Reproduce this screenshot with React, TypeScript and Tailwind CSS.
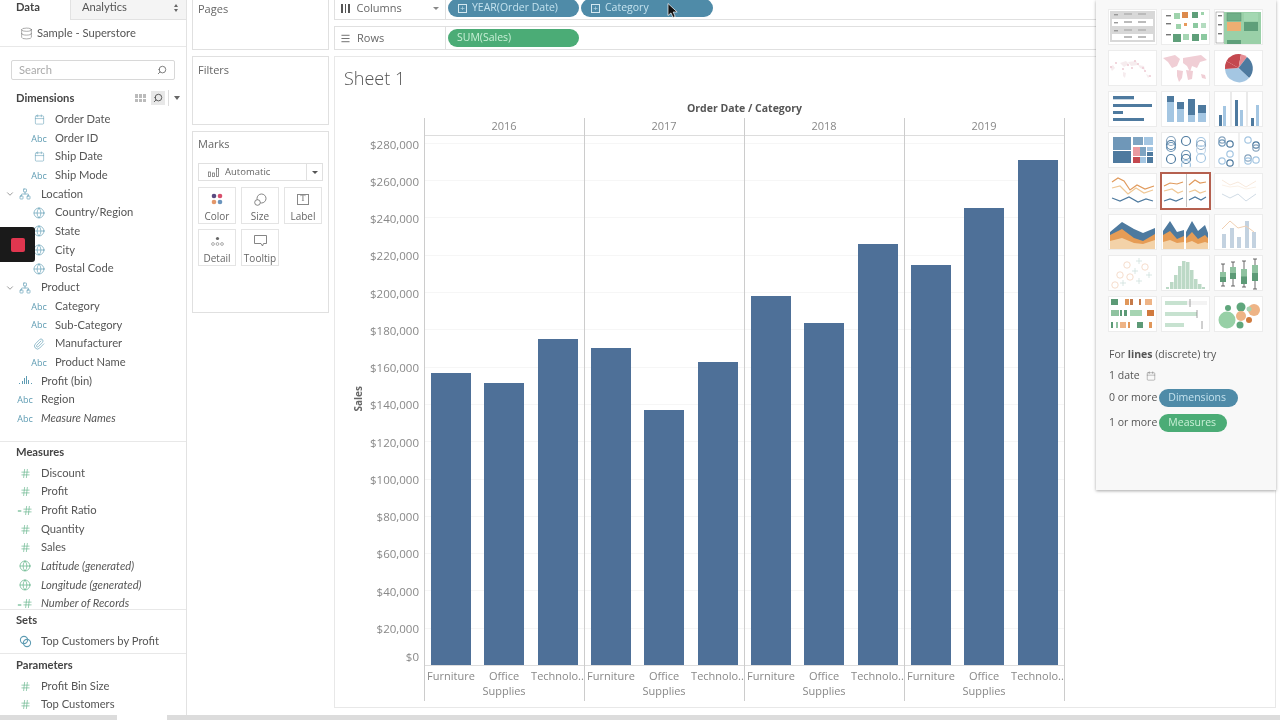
import type { ReactNode } from "react";
import { Calendar, ChevronDown, Globe, Hash, Network, Paperclip, Search, Database, Menu } from "lucide-react";

type Field = { name: string; kind: string; level?: number; italic?: boolean; open?: boolean };

const dimensions: Field[] = [
  { name: "Order Date", kind: "date", level: 2 },
  { name: "Order ID", kind: "abc", level: 2 },
  { name: "Ship Date", kind: "date", level: 2 },
  { name: "Ship Mode", kind: "abc", level: 2 },
  { name: "Location", kind: "tree", open: true },
  { name: "Country/Region", kind: "globe", level: 2 },
  { name: "State", kind: "globe", level: 2 },
  { name: "City", kind: "globe", level: 2 },
  { name: "Postal Code", kind: "globe", level: 2 },
  { name: "Product", kind: "tree", open: true },
  { name: "Category", kind: "abc", level: 2 },
  { name: "Sub-Category", kind: "abc", level: 2 },
  { name: "Manufacturer", kind: "clip", level: 2 },
  { name: "Product Name", kind: "abc", level: 2 },
  { name: "Profit (bin)", kind: "bin" },
  { name: "Region", kind: "abc" },
  { name: "Measure Names", kind: "abc", italic: true },
];

const measures: Field[] = [
  { name: "Discount", kind: "hash" },
  { name: "Profit", kind: "hash" },
  { name: "Profit Ratio", kind: "calc" },
  { name: "Quantity", kind: "hash" },
  { name: "Sales", kind: "hash" },
  { name: "Latitude (generated)", kind: "greenglobe", italic: true },
  { name: "Longitude (generated)", kind: "greenglobe", italic: true },
  { name: "Number of Records", kind: "calc", italic: true },
];

function FieldIcon({ kind }: { kind: string }) {
  if (kind === "abc") return <span className="font-['Open_Sans',sans-serif] text-[9px] leading-none text-[#5f9cb3]">Abc</span>;
  if (kind === "date") return <Calendar size={11} strokeWidth={1.2} className="text-[#5f9cb3]" />;
  if (kind === "globe") return <Globe size={12} strokeWidth={1.3} className="text-[#5f9cb3]" />;
  if (kind === "greenglobe") return <Globe size={12} strokeWidth={1.3} className="text-[#55ad7e]" />;
  if (kind === "tree") return <Network size={12} strokeWidth={1.3} className="text-[#5f9cb3]" />;
  if (kind === "clip") return <Paperclip size={12} strokeWidth={1.3} className="text-[#5f9cb3]" />;
  if (kind === "hash") return <Hash size={11} strokeWidth={1.3} className="text-[#55ad7e]" />;
  if (kind === "calc")
    return (
      <span className="flex items-center">
        <span className="text-[8px] leading-none text-[#55ad7e]">=</span>
        <Hash size={11} strokeWidth={1.3} className="text-[#55ad7e]" />
      </span>
    );
  if (kind === "bin")
    return (
      <svg width="13" height="9" viewBox="0 0 13 9" className="text-[#5f9cb3]" fill="currentColor">
        <rect x="0" y="7" width="1" height="1" />
        <rect x="3" y="5" width="1" height="3" />
        <rect x="5" y="2" width="1" height="6" />
        <rect x="7" y="0" width="1" height="8" />
        <rect x="9" y="4" width="1" height="4" />
        <rect x="12" y="7" width="1" height="1" />
      </svg>
    );
  return (
    <svg width="13" height="13" viewBox="0 0 13 13" fill="none" stroke="#5f9cb3" strokeWidth="1.1">
      <circle cx="5" cy="5" r="3.6" />
      <circle cx="8" cy="8" r="3.6" />
    </svg>
  );
}

function Row({ f }: { f: Field }) {
  return (
    <div className={`flex h-[18.7px] items-center ${f.level === 2 ? "pl-[31px]" : f.open ? "pl-[5px]" : "pl-[17px]"}`}>
      {f.open && <ChevronDown size={10} className="mr-[2px] text-[#888]" />}
      <span className="mr-[8px] flex w-[16px] justify-center">
        <FieldIcon kind={f.kind} />
      </span>
      <span className={`whitespace-nowrap ${f.italic ? "italic" : ""}`}>{f.name}</span>
    </div>
  );
}

function Sidebar() {
  return (
    <aside className="flex w-[187px] shrink-0 flex-col border-r border-[#e2e2e2] bg-white font-['Lato',sans-serif] text-[11.2px] text-[#555]">
      <div className="flex h-[20px] shrink-0">
        <div className="flex w-[70px] items-center pb-[5px] pl-[16px] font-bold text-[#444]">Data</div>
        <div className="flex flex-1 items-center justify-between border-b border-l border-[#e2e2e2] bg-[#f4f4f4] pb-[4px] pl-[11px] pr-[8px]">
          <span>Analytics</span>
          <span className="flex flex-col gap-[2px]">
            <span className="h-0 w-0 border-x-[2.5px] border-b-[3px] border-x-transparent border-b-[#666]" />
            <span className="h-0 w-0 border-x-[2.5px] border-t-[3px] border-x-transparent border-t-[#666]" />
          </span>
        </div>
      </div>
      <div className="flex h-[27px] shrink-0 items-center border-b border-[#e8e8e8] pl-[20px]">
        <Database size={13} strokeWidth={1} className="mr-[4px] text-[#666]" />
        <span>Sample - Superstore</span>
      </div>
      <div className="mx-[11px] mt-[13px] flex h-[20px] shrink-0 items-center justify-between rounded-[2px] border border-[#d8d8d8] px-[7px] text-[#aaa]">
        <span>Search</span>
        <Search size={10} className="-scale-x-100 text-[#666]" />
      </div>
      <div className="mt-[8px] flex h-[20px] shrink-0 items-center pl-[16px] pr-[6px]">
        <span className="font-bold text-[#444]">Dimensions</span>
        <span className="ml-auto mr-[5px] grid h-[8px] w-[11px] grid-cols-3 gap-[1px]">
          {[0, 1, 2, 3, 4, 5].map((i) => (
            <span key={i} className="bg-[#bbb]" />
          ))}
        </span>
        <span className="flex h-[14px] w-[14px] items-center justify-center bg-[#e8e8e8]">
          <Search size={10} className="-scale-x-100 text-[#444]" />
        </span>
        <span className="ml-[3px] mr-[5px] h-[16px] w-px bg-[#ddd]" />
        <span className="h-0 w-0 border-x-[3px] border-t-[4px] border-x-transparent border-t-[#666]" />
      </div>
      <div className="mt-[2px] shrink-0 pb-[13px]">
        {dimensions.map((f) => (
          <Row key={f.name} f={f} />
        ))}
      </div>
      <div className="h-[169px] shrink-0 overflow-hidden border-y border-[#e8e8e8]">
        <div className="flex h-[22px] items-center pl-[16px] font-bold text-[#444]">Measures</div>
        {measures.map((f) => (
          <Row key={f.name} f={f} />
        ))}
      </div>
      <div className="h-[44px] shrink-0 border-b border-[#e8e8e8]">
        <div className="flex h-[22px] items-center pl-[16px] font-bold text-[#444]">Sets</div>
        <Row f={{ name: "Top Customers by Profit", kind: "set" }} />
      </div>
      <div className="flex h-[23px] shrink-0 items-center pl-[16px] font-bold text-[#444]">Parameters</div>
      <Row f={{ name: "Profit Bin Size", kind: "hash" }} />
      <Row f={{ name: "Top Customers", kind: "hash" }} />
    </aside>
  );
}

function MarkCard({ label, children }: { label: string; children: ReactNode }) {
  return (
    <div className="flex h-[37px] w-[38px] flex-col items-center justify-between border border-[#e4e4e4] pt-[4px] text-[10px] leading-[13px] text-[#666]">
      <span className="flex h-[14px] items-center">{children}</span>
      <span>{label}</span>
    </div>
  );
}

function CardsPanel() {
  return (
    <div className="flex h-full w-[137px] shrink-0 flex-col gap-[6px] text-[11px] text-[#666]">
      <div className="-mt-px h-[51px] shrink-0 border border-[#e0e0e0] px-[5px] pt-[1px]">Pages</div>
      <div className="h-[69px] shrink-0 border border-[#e0e0e0] px-[5px] pt-[5px]">Filters</div>
      <div className="h-[182px] shrink-0 border border-[#e0e0e0] px-[5px] pt-[4px]">
        <div>Marks</div>
        <div className="mt-[10.5px] flex h-[18px] items-center border border-[#e0e0e0] pl-[9px] text-[9.5px]">
          <svg width="12" height="9" viewBox="0 0 12 9" fill="none" stroke="#777" strokeWidth="0.8" className="mr-[5px]">
            <rect x="0.5" y="4" width="2" height="4.5" />
            <rect x="4.5" y="5" width="2" height="3.5" />
            <rect x="8.5" y="0.5" width="2" height="8" />
          </svg>
          Automatic
          <span className="ml-auto flex h-full w-[16px] items-center justify-center border-l border-[#e0e0e0]">
            <span className="h-0 w-0 border-x-[3px] border-t-[3px] border-x-transparent border-t-[#555]" />
          </span>
        </div>
        <div className="mt-[6px] grid grid-cols-[38px_38px_38px] gap-x-[5px] gap-y-[5px]">
          <MarkCard label="Color">
            <svg width="12" height="12" viewBox="0 0 12 12">
              <circle cx="3" cy="3" r="2.3" fill="#5a4a80" />
              <circle cx="9" cy="3" r="2.3" fill="#d8506c" />
              <circle cx="3" cy="9" r="2.3" fill="#e3976a" />
              <circle cx="9" cy="9" r="2.3" fill="#6a94bd" />
            </svg>
          </MarkCard>
          <MarkCard label="Size">
            <svg width="13" height="13" viewBox="0 0 13 13" fill="none" stroke="#777" strokeWidth="0.9">
              <circle cx="7.5" cy="5.5" r="4.5" />
              <circle cx="3.5" cy="9.5" r="2.8" fill="white" />
            </svg>
          </MarkCard>
          <MarkCard label="Label">
            <span className="flex h-[11px] w-[12px] items-center justify-center border border-[#888] font-['Liberation_Serif',serif] text-[8px] leading-none">T</span>
          </MarkCard>
          <MarkCard label="Detail">
            <svg width="13" height="11" viewBox="0 0 13 11" fill="none" stroke="#888" strokeWidth="0.7">
              <circle cx="6.5" cy="2.5" r="1.6" fill="#666" stroke="none" />
              <circle cx="2" cy="8" r="1.4" />
              <circle cx="6.5" cy="8" r="1.4" />
              <circle cx="11" cy="8" r="1.4" />
            </svg>
          </MarkCard>
          <MarkCard label="Tooltip">
            <svg width="13" height="12" viewBox="0 0 13 12" fill="none" stroke="#777" strokeWidth="0.9">
              <path d="M.5.5h12v8H9.5L8.5 11 7 8.5H.5z" />
            </svg>
          </MarkCard>
        </div>
      </div>
    </div>
  );
}

function Pill({ label, width, green, plus }: { label: string; width: string; green?: boolean; plus?: boolean }) {
  return (
    <div
      className={`flex shrink-0 items-center rounded-full text-[10.5px] ${width} ${
        green ? "h-[18px] bg-[#4bac76] pl-[9px] text-[#c9f0d6]" : "-mt-px h-[18px] bg-[#4f8ba8] pl-[10px] text-[#c4e2ee]"
      }`}
    >
      {plus && (
        <span className="mr-[5px] flex h-[9px] w-[9px] items-center justify-center border border-[#d4e8f0] text-[8px] leading-none">+</span>
      )}
      {label}
    </div>
  );
}

const years = [
  { year: "2016", tops: [373, 383, 339] },
  { year: "2017", tops: [348, 410, 362] },
  { year: "2018", tops: [296, 323, 244] },
  { year: "2019", tops: [265, 208, 160] },
];

const ticks = ["$280,000", "$260,000", "$240,000", "$220,000", "$200,000", "$180,000", "$160,000", "$140,000", "$120,000", "$100,000", "$80,000", "$60,000", "$40,000", "$20,000"];

function Chart() {
  return (
    <div className="flex text-[#888]">
      <div className="flex w-[89px] shrink-0">
        <div className="mt-[33px] flex h-[530px] w-[35px] shrink-0 items-center justify-end pr-[4px]">
          <span className="rotate-180 text-[10px] font-bold text-[#666] [writing-mode:vertical-rl]">Sales</span>
        </div>
        <div className="mt-[24.500px] flex-1 pr-[6px] text-right text-[11.5px]">
          {ticks.map((t) => (
            <div key={t} className="flex h-[37.25px] items-center justify-end">
              {t}
            </div>
          ))}
          <div className="-mt-[9px] flex h-[37.3px] items-center justify-end">$0</div>
        </div>
      </div>
      <div className="flex flex-col">
        <div className="flex h-[16px] items-center justify-center text-[10.5px] font-bold text-[#555]">Order Date / Category</div>
        <div className="mt-px flex border-r border-[#ccc]">
          {years.map((y) => (
            <div key={y.year} className="w-[160px] border-l border-[#ccc]">
              <div className="flex h-[18px] items-center justify-center border-b border-[#ddd] pr-px text-[11px]">{y.year}</div>
              <div className="flex h-[530px] items-end gap-[13.3px] border-b border-[#ddd] bg-[repeating-linear-gradient(to_top,transparent_0,transparent_36.3px,#f6f6f6_36.3px,#f6f6f6_37.3px)] pl-[6px]">
                {y.tops.map((top, i) => (
                  <div key={i} className="w-[40px] bg-[#4e7098]" style={{ height: 665 - top }} />
                ))}
              </div>
              <div className="flex h-[35px] pt-[2px] text-center text-[11px] leading-[15px]">
                <span className="w-[53px] pr-px">Furniture</span>
                <span className="w-[53px] pr-px">
                  Office
                  <br />
                  Supplies
                </span>
                <span className="w-[53px] whitespace-nowrap">Technolo..</span>
              </div>
            </div>
          ))}
        </div>
      </div>
    </div>
  );
}

const line = "fill-none stroke-[1.2]";

const thumbs: ReactNode[] = [
  <>
    <rect x="2" y="2" width="45" height="31" fill="#d8d8d8" />
    <rect x="4" y="10" width="41" height="7" fill="#fff" />
    <rect x="4" y="25" width="41" height="6" fill="#fff" />
    {[5, 13, 21, 28].map((y) => [16, 30].map((x) => <rect key={x + "-" + y} x={x} y={y - 1} width="8" height="2" fill="#bbb" />))}
    {[5, 13, 21].map((y) => <rect key={y} x="6" y={y} width="4" height="1.4" fill="#999" />)}
  </>,
  <>
    {[6, 14, 25].map((y) => <rect key={y} x="5" y={y} width="5" height="1.4" fill="#777" />)}
    <rect x="13" y="4" width="6" height="6" fill="#9fd3ac" />
    <rect x="21" y="3" width="6" height="6" fill="#dd8a4c" />
    <rect x="31" y="3" width="6" height="6" fill="#5f9f7a" />
    <rect x="40" y="3" width="3" height="3" fill="#9fd3ac" />
    <rect x="15" y="15" width="5" height="5" fill="#9fd3ac" />
    <rect x="23" y="14" width="3" height="3" fill="#e89a5c" />
    <rect x="32" y="14" width="5" height="5" fill="#8cc9a0" />
    <rect x="40" y="14" width="5" height="5" fill="#b4dcc0" />
    <rect x="12" y="25" width="8" height="8" fill="#5f9f7a" />
    <rect x="22" y="25" width="6" height="6" fill="#a6d6b4" />
    <rect x="31" y="25" width="7" height="7" fill="#5f9f7a" />
    <rect x="40" y="25" width="6" height="6" fill="#8cc9a0" />
  </>,
  <>
    <rect x="2" y="3" width="8" height="31" fill="#fff" stroke="#777" strokeWidth="0.5" />
    {[6, 15, 24].map((y) => <rect key={y} x="4" y={y} width="4" height="1.4" fill="#777" />)}
    <rect x="10" y="3" width="37" height="33" fill="#9ad0a8" />
    <rect x="13" y="4" width="14" height="8" fill="#6fb088" stroke="#5c8b70" strokeWidth="0.5" />
    <rect x="30" y="4" width="14" height="8" fill="#a4d8b2" />
    <rect x="13" y="13" width="14" height="9" fill="#eeae72" />
    <rect x="30" y="13" width="14" height="9" fill="#5f9f7a" />
    <rect x="13" y="31" width="14" height="5" fill="#5f9f7a" />
  </>,
  <g opacity="0.75">
    <path d="M2 17l3-2 2 3-3 3zM12 13l6-2 3 3-5 3zM20 12l8-1 2 4-7 1zM30 15l6 1 1 4-5-2zM15 22l3 1-1 5-2-2zM38 24l4 2-2 2z" fill="#f4e6e9" />
    {[[3, 17], [8, 13], [20, 15], [24, 18], [30, 14], [35, 18], [37, 21], [42, 26], [15, 19], [27, 11]].map(([x, y]) => (
      <circle key={x} cx={x} cy={y} r="1.1" fill="#e9bcc8" />
    ))}
  </g>,
  <path d="M2 8l12-3 5 4-3 7-5 2-4-6zM16 20l6 1-1 7-3 4-2-6zM22 8l18-3 6 5-7 2-3 6-5-2-2 6-3-6-4-3zM25 20l7 1-1 8-4 1zM40 24l4 1 1 4-4-1z" fill="#f0ced5" />,
  <>
    <path d="M24.500 18L12.500 11A14 14 0 0 1 27 4.200z" fill="#c4484f" />
    <path d="M24.500 18L27 4.200A14 14 0 0 1 33 7z" fill="#e68d94" />
    <path d="M24.500 18L33 7A14 14 0 0 1 35 28z" fill="#4e7a9f" />
    <path d="M24.500 18L35 28A14 14 0 0 1 11 19z" fill="#a4c6e2" />
    <path d="M24.500 18L11 19A14 14 0 0 1 12.500 11z" fill="#c4484f" />
  </>,
  <g fill="#4e7a9f">
    <rect x="5" y="5" width="21" height="3.300" />
    <rect x="5" y="13" width="39" height="3" />
    <rect x="5" y="20" width="10" height="3" />
    <rect x="5" y="27" width="31" height="3" />
  </g>,
  <>
    <path d="M6 5h7v6H6zM16 11h7v7h-7zM27 8h7v16h-7zM37 14h8v8h-8z" fill="#4e7a9f" />
    <path d="M6 11h7v20H6zM16 18h7v13h-7zM27 24h7v7h-7zM37 22h8v9h-8z" fill="#a4c6e2" />
  </>,
  <>
    <path d="M17 0v36M33 0v36" stroke="#bbb" strokeWidth="0.6" />
    <path d="M5 24h3v12H5zM21 9h3v27h-3zM37 27h3v9h-3z" fill="#4e7a9f" />
    <path d="M9 15h3v21H9zM26 19h3v17h-3zM42 14h3v22h-3z" fill="#a4c6e2" />
  </>,
  <>
    <rect x="5" y="5" width="18" height="13" fill="#6f97b8" />
    <rect x="5" y="19" width="18" height="12" fill="#4e7a9f" />
    <rect x="25" y="5" width="10" height="8" fill="#7ea4c2" />
    <rect x="36" y="5" width="9" height="8" fill="#a4c6e2" />
    <rect x="25" y="15" width="7" height="9" fill="#ea9aa0" />
    <rect x="32" y="15" width="6" height="9" fill="#7ea4c2" />
    <rect x="39" y="15" width="6" height="4" fill="#a4c6e2" />
    <rect x="39" y="20" width="6" height="4" fill="#4e7a9f" />
    <rect x="25" y="25" width="7" height="6" fill="#c4484f" />
    <rect x="32" y="25" width="6" height="6" fill="#a4c6e2" />
    <rect x="39" y="25" width="6" height="6" fill="#4e7a9f" />
  </>,
  <g fill="none" strokeWidth="1.200">
    {[[10, 9, "#8aa6bf"], [10, 13, "#4e7a9f"], [10, 15, "#6f97b8"], [25, 9, "#4e7a9f"], [40, 10, "#a4c6e2"], [40, 13, "#8aa6bf"], [10, 27, "#4e7a9f"], [25, 23, "#6f97b8"], [25, 27, "#4e7a9f"], [40, 26, "#a4c6e2"], [25, 33, "#a4c6e2"], [40, 18, "#c4d8ea"]].map(([x, y, c], i) => (
      <circle key={i} cx={x as number} cy={y as number} r="4.500" stroke={c as string} />
    ))}
  </g>,
  <g fill="none" strokeWidth="1.200">
    <path d="M25 0v36" stroke="#ccc" strokeWidth="0.6" />
    {[[8, 8, "#8aa6bf"], [8, 11, "#6f97b8"], [16, 12, "#4e7a9f"], [16, 22, "#a4c6e2"], [8, 29, "#a4c6e2"], [16, 31, "#4e7a9f"], [34, 8, "#a4c6e2"], [42, 13, "#4e7a9f"], [42, 16, "#8aa6bf"], [34, 26, "#8aa6bf"], [34, 29, "#a4c6e2"], [42, 28, "#a4c6e2"]].map(([x, y, c], i) => (
      <circle key={i} cx={x as number} cy={y as number} r="3.200" stroke={c as string} />
    ))}
  </g>,
  <>
    <path d="M4 9l6-4 6 3 6 9 7-5 8 4 9-3" className={line} stroke="#e09a5c" />
    <path d="M4 15l8-2 8 8 8-6 8 5 9-3" className={line} stroke="#f0c896" />
    <path d="M4 25l8 3 9-4 9 5 8-3 7 2" className={line} stroke="#4e7a9f" />
  </>,
  <>
    <path d="M25.500 1v33" stroke="#aaa" strokeWidth="0.7" />
    <path d="M3 13l6-3 7 1 6-2M28 12l6-5 5 3 6-1" className={line} stroke="#e09a5c" />
    <path d="M3 18l8-2 6 4 5-2M28 19l6-2 5 3 6-2" className={line} stroke="#f0c896" />
    <path d="M3 28l6-2 6 2 7-3M28 27l6-3 6 3 5-3" className={line} stroke="#4e7a9f" />
  </>,
  <g opacity="0.4">
    <path d="M8 7l8 5 8-3 8 5 10-6" fill="none" stroke="#edc8a8" />
    <path d="M8 12l8 2 8-1 8 3 10-2" fill="none" stroke="#f4dcc4" />
    <path d="M8 21l8 4 8-4 8 7 10-7" fill="none" stroke="#8aa6bf" />
  </g>,
  <>
    <path d="M2 18l12-10 12 7 9 4 12-5v22H2z" fill="#4e7a9f" />
    <path d="M2 21l12-6 12 9 9 3 12-7v16H2z" fill="#e69c55" />
    <path d="M2 27l12-3 12 5 9 1 12-4v9H2z" fill="#f3d2a8" />
  </>,
  <>
    <path d="M2 17l7-10 7 11 7-2v20H2zM25 18l6-11 6 10 7-6 3 8v17H25z" fill="#4e7a9f" />
    <path d="M2 21l7-4 7 8 7-3v14H2zM25 24l6-6 6 7 7-4 3 3v12H25z" fill="#e69c55" />
    <path d="M2 28l7-2 7 3 7-1v8H2zM25 29l6-2 6 3 7-2 3 1v7H25z" fill="#f3d2a8" />
  </>,
  <>
    <g fill="#c3d2e0">
      <rect x="8" y="20" width="4" height="14" />
      <rect x="16" y="14" width="4" height="20" />
      <rect x="23" y="23" width="4" height="11" />
      <rect x="31" y="7" width="4" height="27" />
      <rect x="38" y="18" width="4" height="16" />
    </g>
    <path d="M8 15l8-8 8 7 8-2 8 6" fill="none" stroke="#f0cfb2" />
  </>,
  <g fill="none" strokeWidth="0.8" opacity="0.55">
    {[[19, 10], [12, 20], [7, 30], [22, 22], [37, 12]].map(([x, y]) => <circle key={x} cx={x} cy={y} r="3.200" stroke="#e9b08a" />)}
    {[[31, 6], [27, 16], [15, 28], [31, 26], [41, 20]].map(([x, y]) => <path key={x} d={`M${x - 3} ${y}h6M${x} ${y - 3}v6`} stroke="#a7c8c0" />)}
  </g>,
  <g fill="#bcd9c6">
    <rect x="5" y="32" width="3" height="2" />
    <rect x="9" y="27" width="3.500" height="7" />
    <rect x="13" y="20" width="3.500" height="14" />
    <rect x="17" y="11" width="3.500" height="23" />
    <rect x="21" y="6" width="3.500" height="28" />
    <rect x="25" y="7" width="3.500" height="27" />
    <rect x="29" y="15" width="3.500" height="19" />
    <rect x="33" y="24" width="3.500" height="10" />
    <rect x="37" y="29" width="3.500" height="5" />
    <rect x="41" y="32" width="3" height="2" />
  </g>,
  <>
    {[[9, 9, 31, 17, 27], [19, 7, 31, 12, 24], [30, 6, 32, 14, 29], [41, 4, 34, 10, 26]].map(([x, a, b, c, d]) => (
      <g key={x}>
        <path d={`M${x} ${a}v${b - a}M${x - 2} ${a}h4M${x - 2} ${b}h4`} stroke="#444" strokeWidth="0.8" />
        <rect x={x - 3} y={c} width="6" height={d - c} fill="#8fc2a0" />
        <rect x={x - 3} y={(c + d) / 2} width="6" height={(d - c) / 2} fill="#5c9a76" />
      </g>
    ))}
  </>,
  <>
    <rect x="3" y="3" width="7" height="6" fill="#5c9a76" />
    <rect x="17" y="3" width="4" height="6" fill="#e0975a" />
    <rect x="22" y="3" width="3" height="6" fill="#c57a4a" />
    <rect x="31" y="3" width="2" height="6" fill="#c57a4a" />
    <rect x="37" y="3" width="7" height="6" fill="#eeb486" />
    <rect x="3" y="14" width="8" height="6" fill="#8fc2a0" />
    <rect x="12" y="14" width="2" height="6" fill="#5c9a76" />
    <rect x="16" y="14" width="3" height="6" fill="#5c9a76" />
    <rect x="22" y="14" width="12" height="6" fill="#a6d4b2" />
    <rect x="39" y="14" width="7" height="6" fill="#d07a3e" />
    <rect x="3" y="26" width="2" height="6" fill="#5c9a76" />
    <rect x="8" y="26" width="2" height="6" fill="#8fc2a0" />
    <rect x="12" y="26" width="6" height="6" fill="#eeb486" />
    <rect x="20" y="26" width="2" height="6" fill="#e0975a" />
    <rect x="29" y="26" width="6" height="6" fill="#5c9a76" />
    <rect x="41" y="26" width="3" height="6" fill="#e0975a" />
  </>,
  <>
    <rect x="4" y="5" width="22" height="4" fill="#c7e2d0" />
    <rect x="26" y="5" width="20" height="4" fill="#f3f3f3" />
    <rect x="4" y="16" width="32" height="4" fill="#c7e2d0" />
    <rect x="4" y="27" width="19" height="4" fill="#c7e2d0" />
    <path d="M29 3v8M36 14v8M41 25v8" stroke="#888" strokeWidth="0.8" />
  </>,
  <>
    <circle cx="13" cy="24" r="8.500" fill="#97d0a6" />
    <circle cx="27" cy="11" r="4.500" fill="#5fa67c" />
    <circle cx="14" cy="12" r="3" fill="#5fa67c" />
    <circle cx="40" cy="14" r="6" fill="#eeb486" />
    <circle cx="35" cy="13" r="2.500" fill="#a6d4b2" />
    <circle cx="27" cy="20" r="5" fill="#eeb486" />
    <circle cx="35" cy="24" r="3" fill="#d07a3e" />
    <circle cx="26" cy="29" r="3.500" fill="#5fa67c" />
  </>,
];

function ShowMe() {
  return (
    <div className="absolute right-[4px] top-0 h-[490px] w-[180px] bg-[#f8f8f8] pl-[12px] pt-[9px] text-[10.5px] text-[#555] shadow-[0_1px_3px_rgba(0,0,0,0.35)]">
      <div className="grid grid-cols-[49px_49px_49px] gap-x-[4px] gap-y-[5px]">
        {thumbs.map((t, i) => (
          <svg key={i} viewBox="0 0 49 36" width="49" height="36" className={`bg-white ${i === 13 ? "outline-2 -outline-offset-1 outline-[#b5604f]" : "outline-1 -outline-offset-1 outline-[#ececec]"}`}>
            {t}
          </svg>
        ))}
      </div>
      <div className="ml-px">
        <div className="mt-[13px] flex h-[20px] items-center">
          <span>
            For <b>lines</b> (discrete) try
          </span>
        </div>
        <div className="mt-px flex h-[20px] items-center">
          1 date
          <Calendar size={10} strokeWidth={1} className="ml-[6px] text-[#666]" />
        </div>
        <div className="mt-[3px] flex h-[18px] items-center">
          0 or more
          <span className="ml-[2px] flex h-[18px] w-[79px] items-center rounded-full bg-[#4f8ba8] pl-[9px] text-[#c4e2ee]">Dimensions</span>
        </div>
        <div className="mt-[7px] flex h-[18px] items-center">
          1 or more
          <span className="ml-[2px] flex h-[18px] w-[68px] items-center rounded-full bg-[#4bac76] pl-[9px] text-[#c9f0d6]">Measures</span>
        </div>
      </div>
    </div>
  );
}

export default function App() {
  return (
    <div className="relative flex h-[720px] w-[1280px] flex-col overflow-hidden bg-white font-['Open_Sans',sans-serif] blur-[0.35px]">
      <div className="flex h-[715px] shrink-0">
        <Sidebar />
        <div className="ml-[5px]">
          <CardsPanel />
        </div>
        <main className="ml-[5px] mr-[4px] flex flex-1 flex-col text-[11px] text-[#666]">
          <div className="-mt-px flex h-[21px] shrink-0 border border-[#e0e0e0]">
            <div className="flex w-[111px] items-center border-r border-[#e0e0e0] pb-[2px] pl-[6px]">
              <span className="mr-[7px] flex h-[9px] gap-[2px]">
                <span className="w-[1.5px] bg-[#555]" />
                <span className="w-[1.5px] bg-[#555]" />
                <span className="w-[1.5px] bg-[#555]" />
              </span>
              Columns
              <span className="ml-auto mr-[6px] h-0 w-0 border-x-[3px] border-t-[3px] border-x-transparent border-t-[#888]" />
            </div>
            <div className="ml-[2px] flex gap-[2px]">
              <Pill label="YEAR(Order Date)" width="w-[131px]" plus />
              <Pill label="Category" width="w-[132px]" plus />
            </div>
          </div>
          <div className="mt-[6px] flex h-[24px] shrink-0 items-center border border-[#e0e0e0]">
            <div className="flex h-full w-[111px] items-center border-r border-[#e0e0e0] pl-[5px]">
              <Menu size={11} strokeWidth={1.8} className="mr-[6px] text-[#555]" />
              Rows
            </div>
            <div className="ml-[2px]">
              <Pill label="SUM(Sales)" width="w-[131px]" green />
            </div>
          </div>
          <div className="mt-[6px] h-[652px] shrink-0 border border-[#e8e8e8]">
            <div className="h-[44px] pl-[9px] pt-[8px] text-[18px] font-light leading-[26px] text-[#555]">Sheet 1</div>
            <Chart />
          </div>
        </main>
      </div>
      <div className="flex h-[5px] bg-[#dcdcdc]">
        <div className="ml-[117px] w-[50px] bg-white" />
      </div>
      <ShowMe />
      <div className="absolute left-0 top-[227px] flex h-[35px] w-[35px] items-center justify-center rounded-r-[3px] bg-[#1a1a1a]">
        <span className="h-[14px] w-[14px] rounded-[2px] bg-[#e0364f]" />
      </div>
      <svg width="12" height="16" viewBox="0 0 12 16" className="absolute left-[667px] top-[3px]">
        <path d="M1 0.500v12l3-2.600 2 4.600 2.200-1-2-4.500h4z" fill="#111" stroke="#fff" strokeWidth="0.7" />
      </svg>
    </div>
  );
}
